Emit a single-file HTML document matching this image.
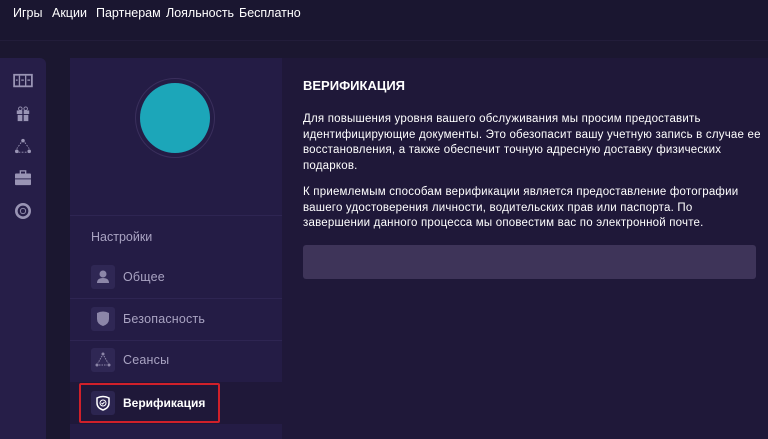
<!DOCTYPE html>
<html><head><meta charset="utf-8"><style>
*{margin:0;padding:0;box-sizing:border-box}
body{width:768px;height:439px;overflow:hidden;background:#1b1730;font-family:"Liberation Sans","Noto Sans CJK SC",sans-serif;position:relative}
.top{position:absolute;left:0;top:0;width:768px;height:41px;background:#1a1630;border-bottom:1px solid #221d3a}
.top span{position:absolute;top:6px;color:#fff;font-size:12.5px}
.side{position:absolute;left:0;top:58px;width:46px;height:381px;background:#261e48;border-radius:0 6px 0 0}
.panel{position:absolute;left:70px;top:58px;width:212px;height:381px;background:#241c45}
.right{position:absolute;left:282px;top:58px;width:486px;height:381px;background:#1f1839}
.av{position:absolute;left:135px;top:78px;width:80px;height:80px;border-radius:50%;border:1px solid #3a2f5c}
.av div{position:absolute;left:4px;top:4px;width:70px;height:70px;border-radius:50%;background:#1ca6b9}
.hr{position:absolute;left:70px;width:212px;height:1px;background:#2e2552}
.item{position:absolute;left:91px;width:24px;height:24px;background:#2f2754;border-radius:3px}
.lbl{position:absolute;left:123px;color:#a9a3c2;font-size:12.5px;letter-spacing:0.2px}
h1{position:absolute;left:303px;top:78px;color:#fff;font-size:13px;font-weight:bold}
p{position:absolute;left:303px;width:458px;color:#fff;font-size:11.5px;line-height:15.5px;letter-spacing:0.2px}
.ic{position:absolute;left:13px;width:20px;height:16px}
</style></head><body>
<div class="top">
<span style="left:13px">Игры</span><span style="left:52px">Акции</span><span style="left:96px">Партнерам</span><span style="left:166px">Лояльность</span><span style="left:239px">Бесплатно</span>
</div>
<div class="side">
<svg class="ic" style="top:15px" viewBox="0 0 22 18"><rect x="1" y="2" width="20" height="13" fill="none" stroke="#9994b4" stroke-width="2"/><path d="M7 3v12M14 3v12M3 8h2M9 8h3M16 8h3" stroke="#9994b4" stroke-width="1.5"/></svg>
<svg class="ic" style="top:48px" viewBox="0 0 22 18"><rect x="4" y="5" width="14" height="4" fill="#9994b4"/><rect x="5" y="10" width="12" height="7" fill="#9994b4"/><path d="M11 5v12" stroke="#261e48" stroke-width="1.5"/><circle cx="8" cy="3" r="2" fill="none" stroke="#9994b4"/><circle cx="14" cy="3" r="2" fill="none" stroke="#9994b4"/></svg>
<svg class="ic" style="top:80px" viewBox="0 0 22 18"><circle cx="11" cy="3" r="2" fill="#9994b4"/><circle cx="4" cy="15" r="2" fill="#9994b4"/><circle cx="18" cy="15" r="2" fill="#9994b4"/><path d="M9 5L4 12M13 5l5 7M6 16h10" stroke="#9994b4" stroke-dasharray="2 1.5"/></svg>
<svg class="ic" style="top:112px" viewBox="0 0 22 18"><rect x="2" y="4" width="18" height="13" rx="1" fill="#9994b4"/><rect x="8" y="1" width="6" height="4" fill="none" stroke="#9994b4" stroke-width="1.5"/><path d="M2 10h18" stroke="#261e48"/></svg>
<svg class="ic" style="top:145px" viewBox="0 0 22 18"><circle cx="11" cy="9" r="7.5" fill="none" stroke="#9994b4" stroke-width="3"/><circle cx="11" cy="9" r="3" fill="none" stroke="#9994b4" stroke-width="1"/></svg>
</div>
<div class="panel"></div>
<div class="right"></div>
<div class="av"><div></div></div>
<div class="hr" style="top:215px"></div>
<div style="position:absolute;left:91px;top:230px;color:#a9a3c2;font-size:12.5px">Настройки</div>
<div class="item" style="top:265px"><svg width="24" height="24"><circle cx="12" cy="9" r="3.5" fill="#8c86a8"/><path d="M6 18q0-5 6-5t6 5z" fill="#8c86a8"/></svg></div>
<div class="lbl" style="top:270px">Общее</div>
<div class="hr" style="top:298px"></div>
<div class="item" style="top:307px"><svg width="24" height="24"><path d="M6 6q6-3 12 0v6q0 5-6 7-6-2-6-7z" fill="#8c86a8"/></svg></div>
<div class="lbl" style="top:312px">Безопасность</div>
<div class="hr" style="top:340px"></div>
<div class="item" style="top:348px"><svg width="24" height="24"><circle cx="12" cy="6" r="1.5" fill="#8c86a8"/><circle cx="6" cy="17" r="1.5" fill="#8c86a8"/><circle cx="18" cy="17" r="1.5" fill="#8c86a8"/><path d="M11 8l-4 7M13 8l4 7M8 17h8" stroke="#8c86a8" stroke-dasharray="1.5 1"/></svg></div>
<div class="lbl" style="top:353px">Сеансы</div>
<div style="position:absolute;left:70px;top:382px;width:212px;height:42px;background:#1f1839"></div>
<div style="position:absolute;left:79px;top:383px;width:141px;height:40px;border:2px solid #d0202a;border-radius:2px"></div>
<div class="item" style="top:391px;background:#2c2550"><svg width="24" height="24"><path d="M6 7q6-3 12 0v5q0 5-6 7-6-2-6-7z" fill="none" stroke="#fff" stroke-width="1.5"/><circle cx="12" cy="12" r="3" fill="none" stroke="#fff"/><path d="M10.5 12l1 1 2-2" stroke="#fff" fill="none"/></svg></div>
<div class="lbl" style="top:396px;color:#fff;font-weight:bold;font-size:12px;letter-spacing:0">Верификация</div>
<h1>ВЕРИФИКАЦИЯ</h1>
<p style="top:112px">Для повышения уровня вашего обслуживания мы просим предоставить идентифицирующие документы. Это обезопасит вашу учетную запись в случае ее восстановления, а также обеспечит точную адресную доставку физических подарков.</p>
<p style="top:185px">К приемлемым способам верификации является предоставление фотографии вашего удостоверения личности, водительских прав или паспорта. По завершении данного процесса мы оповестим вас по электронной почте.</p>
<div style="position:absolute;left:303px;top:245px;width:453px;height:34px;background:#3e3459;border-radius:3px"></div>
</body></html>
